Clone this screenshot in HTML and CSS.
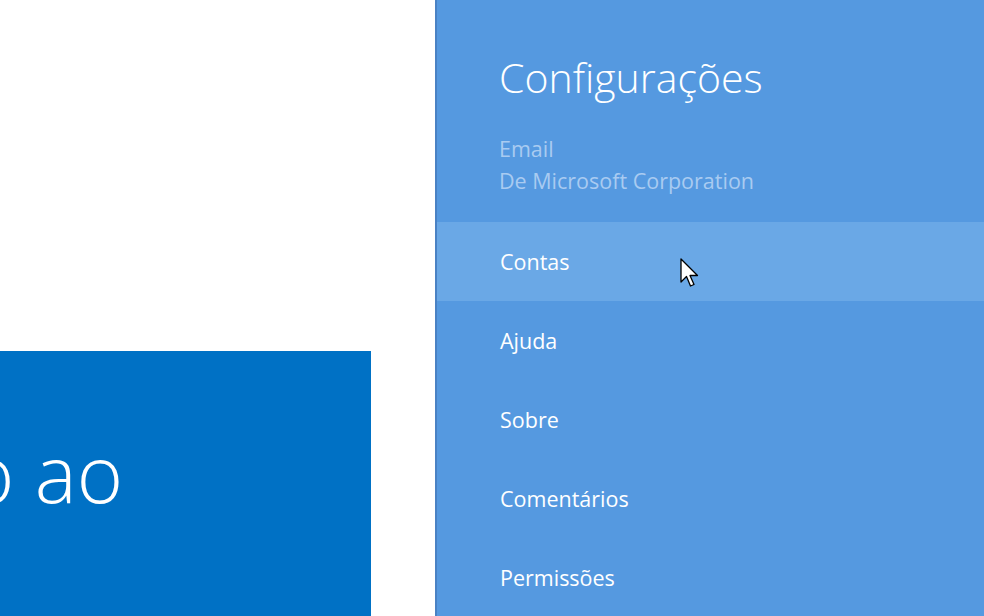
FILE: index.html
```html
<!DOCTYPE html>
<html lang="pt">
<head>
    <meta charset="UTF-8">
    <title>Configurações</title>
    <link rel="stylesheet" href="styles.css">
</head>
<body>
    <div class="screen">
        <div class="app-area">
            <div class="tile">
                <span class="tile-text">Bem-vindo ao</span>
            </div>
        </div>

        <!-- Settings charm -->
        <div class="settings">
            <div class="settings-head">
                <h1>Configurações</h1>
                <div class="app-info">
                    <div>Email</div>
                    <div>De Microsoft Corporation</div>
                </div>
            </div>
            <ul class="menu">
                <li class="hover">Contas
                    <svg class="cursor" width="20" height="32" viewBox="0 0 20 32">
                        <path d="M1 1 L1 24 L6.5 18.5 L10.5 28 L14 26.5 L10 17.5 L17.5 17.5 Z" fill="#fff" stroke="#000" stroke-width="1.3" stroke-linejoin="round"/>
                    </svg>
                </li>
                <li>Ajuda</li>
                <li>Sobre</li>
                <li>Comentários</li>
                <li>Permissões</li>
            </ul>
        </div>
    </div>
</body>
</html>
```

FILE: styles.css
```css
body {
    margin: 0;
    font-family: "Open Sans", "Noto Sans", sans-serif;
    background-color: #fff;
    overflow: hidden;
}
.screen {
    display: flex;
    width: 984px;
    height: 616px;
}
.app-area {
    width: 435px;
    flex-shrink: 0;
    background-color: #fff;
}
.tile {
    margin-top: 351px;
    width: 371px;
    height: 265px;
    background-color: #0071c5;
    overflow: hidden;
    display: flex;
    justify-content: flex-end;
    padding-top: 82px;
    box-sizing: border-box;
    padding-right: 248px;
}
.tile-text {
    color: #fff;
    font-weight: 300;
    font-size: 79px;
    line-height: 79px;
    white-space: nowrap;
}
.settings {
    flex: 1;
    background-color: #5599e0;
    border-left: 2px solid #4a82c4;
}
.settings-head {
    padding: 51px 0 25px 62px;
}
.settings-head h1 {
    margin: 0;
    color: #fff;
    font-weight: 300;
    font-size: 41px;
    line-height: 52px;
}
.app-info {
    margin-top: 30px;
    color: #a9cbf1;
    font-size: 21.5px;
    line-height: 32px;
}
.menu {
    list-style: none;
    margin: 0;
    padding: 0;
}
.menu li {
    position: relative;
    height: 79px;
    line-height: 79px;
    padding-left: 63px;
    color: #fff;
    font-size: 21.5px;
}
.menu li.hover {
    background-color: #6aa8e6;
}
.cursor {
    position: absolute;
    left: 243px;
    top: 36px;
}
```
